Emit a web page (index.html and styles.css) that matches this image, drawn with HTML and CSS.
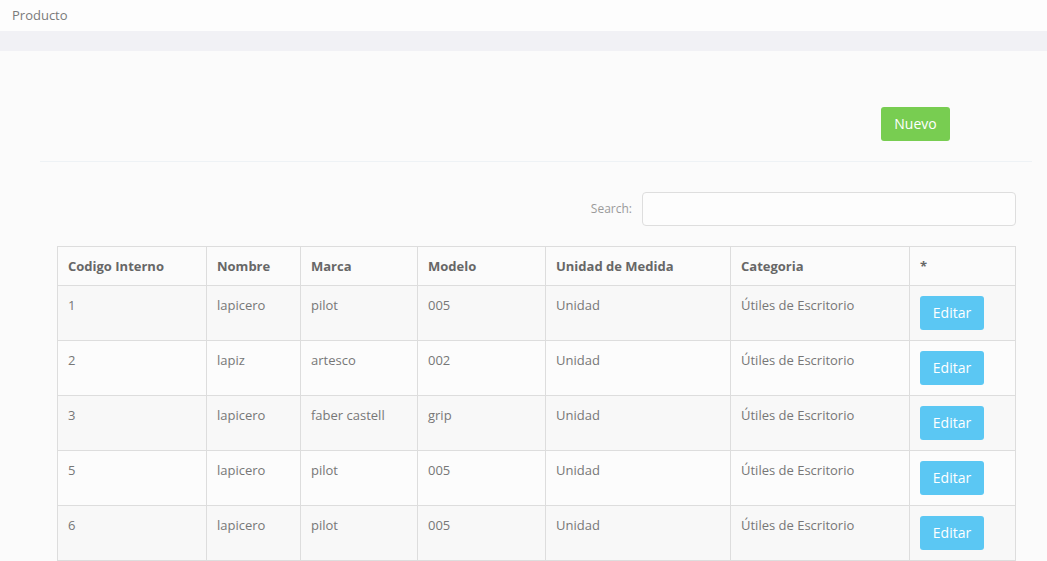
FILE: index.html
```html
<!DOCTYPE html>
<html>
<head>
<meta charset="utf-8">
<link rel="stylesheet" href="styles.css">
</head>
<body>
<div class="topbar">Producto</div>
<div class="stripe"></div>
<div class="content">
  <div class="toolbar">
    <button class="btn btn-success">Nuevo</button>
  </div>
  <hr class="divider">
  <div class="table-wrap">
    <div class="search-row">
      <label class="search-label">Search:</label>
      <input class="search-input" type="text">
    </div>
    <table class="grid">
      <colgroup>
        <col class="c1"><col class="c2"><col class="c3"><col class="c4"><col class="c5"><col class="c6"><col class="c7">
      </colgroup>
      <thead>
        <tr>
          <th>Codigo Interno</th>
          <th>Nombre</th>
          <th>Marca</th>
          <th>Modelo</th>
          <th>Unidad de Medida</th>
          <th>Categoria</th>
          <th>*</th>
        </tr>
      </thead>
      <tbody>
        <tr class="odd"><td>1</td><td>lapicero</td><td>pilot</td><td>005</td><td>Unidad</td><td>Útiles de Escritorio</td><td><button class="btn btn-info">Editar</button></td></tr>
        <tr><td>2</td><td>lapiz</td><td>artesco</td><td>002</td><td>Unidad</td><td>Útiles de Escritorio</td><td><button class="btn btn-info">Editar</button></td></tr>
        <tr class="odd"><td>3</td><td>lapicero</td><td>faber castell</td><td>grip</td><td>Unidad</td><td>Útiles de Escritorio</td><td><button class="btn btn-info">Editar</button></td></tr>
        <tr><td>5</td><td>lapicero</td><td>pilot</td><td>005</td><td>Unidad</td><td>Útiles de Escritorio</td><td><button class="btn btn-info">Editar</button></td></tr>
        <tr class="odd"><td>6</td><td>lapicero</td><td>pilot</td><td>005</td><td>Unidad</td><td>Útiles de Escritorio</td><td><button class="btn btn-info">Editar</button></td></tr>
      </tbody>
    </table>
  </div>
</div>
</body>
</html>
```
FILE: styles.css
```css
* { box-sizing: border-box; }
html, body {
  margin: 0;
  padding: 0;
  background: #fbfbfb;
  font-family: "Open Sans", "Liberation Sans", sans-serif;
  color: #777;
  font-size: 13px;
}
.topbar {
  height: 31px;
  background: #fdfdfd;
  padding: 6px 12px 0;
  font-size: 13px;
  line-height: 18px;
  color: #7a7a7a;
}
.stripe {
  height: 20px;
  background: #f1f1f5;
}
.content {
  padding: 0 15px 0 40px;
}
.toolbar {
  display: flex;
  justify-content: flex-end;
  padding: 56px 82px 0 0;
  height: 110px;
}
.btn {
  border: none;
  border-radius: 3px;
  color: #fff;
  font-family: "Open Sans", "Liberation Sans", sans-serif;
  font-size: 14px;
  height: 34px;
  padding: 0;
  line-height: 34px;
  cursor: pointer;
}
.btn-success {
  background: #78cd51;
  width: 69px;
}
.btn-info {
  background: #5bc7f3;
  width: 64px;
  display: block;
}
.divider {
  border: none;
  border-top: 1px solid #eef2f5;
  margin: 0;
  height: 0;
}
.table-wrap {
  padding: 30px 16px 0 17px;
}
.search-row {
  display: flex;
  justify-content: flex-end;
  align-items: center;
  gap: 10px;
  margin-bottom: 20px;
}
.search-label {
  font-size: 12px;
  color: #9a9a9a;
  margin-top: -2px;
}
.search-input {
  width: 374px;
  height: 34px;
  border: 1px solid #dedede;
  border-radius: 4px;
  background: #fdfdfd;
}
.grid {
  width: 958px;
  border-collapse: collapse;
  table-layout: fixed;
}
.grid th, .grid td {
  border: 1px solid #dddddd;
  padding: 10px 10px;
  text-align: left;
  vertical-align: top;
}
.grid th {
  font-weight: 700;
  color: #676767;
  line-height: 18px;
}
.grid td {
  line-height: 19px;
  height: 55px;
  color: #777;
}
.grid tr.odd td { background: #f8f8f8; }
.grid tbody tr:not(.odd) td { background: #fcfcfc; }
.c1 { width: 149px; }
.c2 { width: 94px; }
.c3 { width: 117px; }
.c4 { width: 128px; }
.c5 { width: 185px; }
.c6 { width: 179px; }
.c7 { width: 106px; }
```
